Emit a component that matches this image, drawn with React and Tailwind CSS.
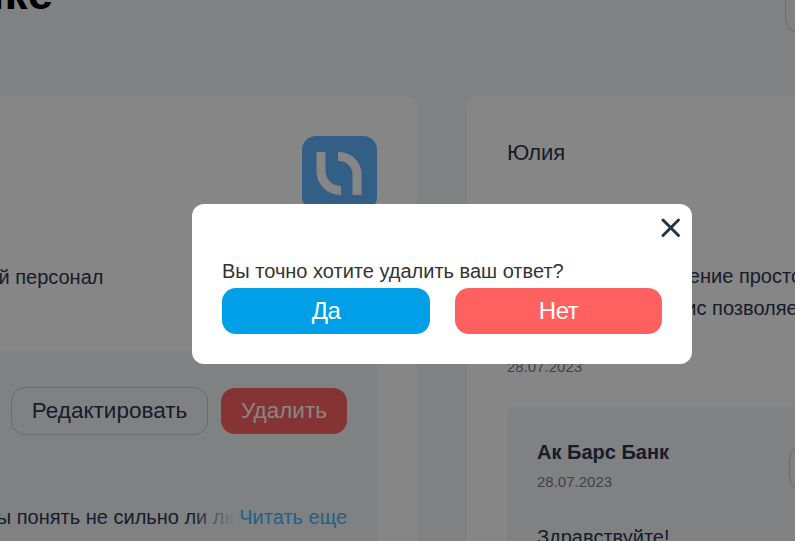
const sans = { fontFamily: '"Liberation Sans", Arial, sans-serif' }

function LogoMark() {
  return (
    <svg width="75" height="75" viewBox="0 0 75 75" className="block">
      <rect width="75" height="75" rx="14" fill="#61b5ff" />
      <path d="M19 16 V35 A19.5 19.5 0 0 0 38.5 54.5 H39" fill="none" stroke="#ffffff" strokeWidth="9" />
      <path d="M36 20.5 H37 A18 18 0 0 1 55 38.5 V59" fill="none" stroke="#ffffff" strokeWidth="9" />
    </svg>
  )
}

function LeftCard() {
  return (
    <div className="w-[535px] h-[600px] shrink-0 bg-white rounded-[10px] px-10 pt-10">
      <div className="flex justify-end">
        <LogoMark />
      </div>
      <p className="mt-[50px] ml-[-9px] text-[20px] leading-8 text-[#2f3650] whitespace-nowrap">Вежливый персонал</p>
      <div className="mt-[58px] bg-[#f4f6f9] rounded-[10px] px-[30px] pt-9 pb-8">
        <div className="flex justify-end items-center gap-[13px]">
          <button className="h-12 w-[197px] bg-transparent border border-[#c9cbd1] rounded-[14px] text-[22.5px] text-[#2f3650]">
            Редактировать
          </button>
          <button className="h-[46px] w-[126px] bg-[#ff6161] rounded-[14px] text-[22.5px] text-white">Удалить</button>
        </div>
        <div className="mt-[66px] flex items-center">
          <div className="relative flex-1 overflow-hidden whitespace-nowrap text-[20px] leading-8 text-[#2f3650]">
            Чтобы понять не сильно ли людям нравится
            <div className="absolute inset-y-0 right-0 w-[46px] bg-gradient-to-r from-transparent to-[#f4f6f9]" />
          </div>
          <a className="ml-1 text-[20px] leading-8 text-[#40b8ff] whitespace-nowrap">Читать еще</a>
        </div>
      </div>
    </div>
  )
}

function RightCard() {
  return (
    <div className="w-[500px] h-[600px] shrink-0 bg-white rounded-[10px] px-10 pt-[41px]">
      <p className="text-[22px] leading-8 text-[#2f3650]">Юлия</p>
      <div className="mt-[91px] text-[20px] leading-8 text-[#2f3650] whitespace-nowrap">
        <p className="ml-[-8px]">Прекрасное впечатление простое и удобное</p>
        <p className="ml-[-22px]">Наш банковский сервис позволяет</p>
      </div>
      <p className="mt-[33px] text-[15px] leading-5 text-[#7b7f8c]">28.07.2023</p>
      <div className="mt-[30px] bg-[#f4f6f9] rounded-[10px] px-[30px] pt-[31px] pb-8">
        <div className="flex justify-between items-start">
          <div>
            <p className="text-[20px] leading-7 font-bold text-[#2f3650]">Ак Барс Банк</p>
            <p className="mt-1.5 text-[15px] leading-5 text-[#7b7f8c]">28.07.2023</p>
          </div>
          <button className="mt-[7px] h-[46px] w-[108px] border border-[#c9cbd1] rounded-[14px] text-[22px] text-[#2f3650]">
            Ещё
          </button>
        </div>
        <p className="mt-[29px] text-[20px] leading-8 text-[#2f3650]">Здравствуйте!</p>
      </div>
    </div>
  )
}

function ConfirmModal() {
  return (
    <div className="absolute inset-0 bg-black/[.475]">
      <div className="absolute left-[192px] top-[204px] w-[500px] h-[160px] bg-white rounded-[12px] px-[30px] pb-[30px] flex flex-col justify-end">
        <button className="absolute right-[10px] top-[13px]">
          <svg width="22" height="22" viewBox="0 0 22 22" className="block">
            <path d="M3 3 L18.5 18.5 M18.5 3 L3 18.5" stroke="#22384a" strokeWidth="3" strokeLinecap="round" />
          </svg>
        </button>
        <p className="text-[20px] leading-[22px] text-[#333333] mb-1.5">Вы точно хотите удалить ваш ответ?</p>
        <div className="flex gap-[25px]">
          <button className="w-[208px] h-[46px] bg-[#009fe8] rounded-[14px] text-[24px] tracking-[-0.5px] text-white">Да</button>
          <button className="w-[207px] h-[46px] bg-[#ff6161] rounded-[14px] text-[24px] tracking-[-0.5px] text-white">Нет</button>
        </div>
      </div>
    </div>
  )
}

export default function App() {
  return (
    <div className="relative w-[795px] h-[541px] overflow-hidden bg-[#f4f6fa]" style={sans}>
      <div className="ml-[-118px] mt-[-20px] w-[1200px]">
        <div className="flex justify-between items-start h-[53px] w-[1019px]">
          <h1 className="w-[171px] mt-[-10px] flex justify-end whitespace-nowrap text-[46px] leading-[46px] font-bold text-black">
            Отзывы о банке
          </h1>
          <div className="w-[116px] h-[53px] border border-[#c9cbd1] rounded-[14px]" />
        </div>
        <div className="mt-[63px] flex gap-[50px]">
          <LeftCard />
          <RightCard />
        </div>
      </div>
      <ConfirmModal />
    </div>
  )
}
